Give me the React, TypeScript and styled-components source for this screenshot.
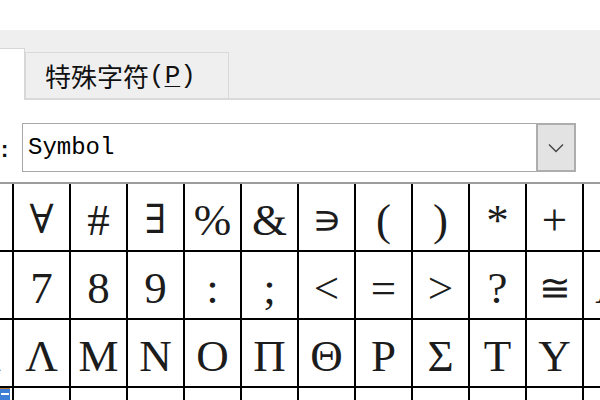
import React from "react";
import styled, { createGlobalStyle } from "styled-components";

const Global = createGlobalStyle`
  html, body { margin: 0; padding: 0; background: #ffffff; }
  body { width: 600px; height: 400px; overflow: hidden; font-family: "Liberation Sans", sans-serif; }
`;

const Page = styled.div`
  width: 600px;
  height: 400px;
  overflow: hidden;
  display: flex;
  flex-direction: column;
  background: #ffffff;
`;

const TopGap = styled.div`
  height: 30px;
  flex: none;
`;

const TabBand = styled.div`
  height: 70px;
  flex: none;
  background: #efefef;
  display: flex;
  align-items: flex-end;
`;

const ActiveTab = styled.div`
  width: 24px;
  height: 51px;
  flex: none;
  background: #ffffff;
  border-top: 1px solid #d6d6d6;
  border-right: 1px solid #d6d6d6;
`;

const Tab = styled.div`
  height: 48px;
  width: 204px;
  flex: none;
  box-sizing: border-box;
  background: #efefef;
  border: 1px solid #d9d9d9;
  border-bottom: 2px solid #d9d9d9;
  display: flex;
  align-items: center;
  padding-left: 19px;
  font-family: "Noto Sans CJK SC", sans-serif;
  font-size: 26px;
  color: #111111;
  line-height: 1;
`;

const Mnemonic = styled.span`
  font-family: "Liberation Mono", "Noto Sans CJK SC", monospace;
  font-size: 26px;
  & u { text-decoration-thickness: 1px; text-underline-offset: 3px; }
`;

const Filler = styled.div`
  flex: 1;
  border-bottom: 2px solid #d9d9d9;
`;

const Content = styled.div`
  flex: 1;
  display: flex;
  flex-direction: column;
  padding-top: 23px;
`;

const FontRow = styled.div`
  display: flex;
  align-items: center;
  height: 49px;
`;

const Label = styled.div`
  width: 22px;
  flex: none;
  font-family: "Liberation Mono", monospace;
  font-size: 22px;
  font-weight: bold;
  color: #111;
  padding-top: 8px;
  text-indent: -2px;
`;

const Combo = styled.div`
  width: 554px;
  height: 49px;
  box-sizing: border-box;
  border: 1px solid #a8a8a8;
  display: flex;
  align-items: stretch;
  background: #ffffff;
`;

const ComboText = styled.div`
  flex: 1;
  display: flex;
  align-items: center;
  padding-left: 5px;
  font-family: "Liberation Mono", monospace;
  font-size: 24px;
  color: #000;
`;

const DropButton = styled.div`
  width: 40px;
  flex: none;
  box-sizing: border-box;
  background: #e3e3e3;
  border: 2px solid #adadad;
  margin: -1px -1px -1px 0;
  display: flex;
  align-items: center;
  justify-content: center;
`;

const Grid = styled.div`
  margin-top: 10px;
  border-top: 2px solid #9c9c9c;
  display: grid;
  grid-template-columns: 12px repeat(10, 55px) 1fr;
  grid-auto-rows: 66px;
  gap: 2px;
  background: #000000;
`;

const Cell = styled.div<{ $edge?: "left" | "right" }>`
  background: #ffffff;
  overflow: hidden;
  display: flex;
  justify-content: ${(p) => (p.$edge === "left" ? "flex-end" : "flex-start")};
  position: relative;
`;

const Glyph = styled.div<{ $size?: number }>`
  width: 55px;
  flex: none;
  display: flex;
  align-items: center;
  justify-content: center;
  padding-top: 6px;
  box-sizing: border-box;
  font-family: "Liberation Serif", "DejaVu Serif", serif;
  font-size: ${(p) => p.$size ?? 45}px;
  line-height: 1;
  color: #1c1c1c;
`;

const Marker = styled.div`
  position: absolute;
  left: 0;
  top: 0;
  width: 10px;
  height: 12px;
  background: #3d7fd6;
  border-top: 1px solid #b77a3a;
  &::after {
    content: "";
    position: absolute;
    left: 1px;
    right: 1px;
    top: 4px;
    height: 2px;
    background: #ffffff;
  }
`;

const rows: string[][] = [
  ["!", "∀", "#", "∃", "%", "&", "∍", "(", ")", "*", "+", ","],
  ["6", "7", "8", "9", ":", ";", "<", "=", ">", "?", "≅", "Α"],
  ["Κ", "Λ", "Μ", "Ν", "Ο", "Π", "Θ", "Ρ", "Σ", "Τ", "Υ", "ς"],
  ["Ω", "Ξ", "Ψ", "Ζ", "[", "∴", "]", "⊥", "_", "", "α", "β"],
];

const sizes: Record<string, number> = { "∍": 42, "∀": 40, "∃": 40, "≅": 38 };

export default function App() {
  return (
    <Page>
      <Global />
      <TopGap />
      <TabBand>
        <ActiveTab />
        <Tab>
          特殊字符
          <Mnemonic>
            (<u>P</u>)
          </Mnemonic>
        </Tab>
        <Filler />
      </TabBand>
      <Content>
        <FontRow>
          <Label>:</Label>
          <Combo>
            <ComboText>Symbol</ComboText>
            <DropButton>
              <svg width="16" height="10" viewBox="0 0 16 10">
                <polyline points="1,1.5 8,8.5 15,1.5" fill="none" stroke="#444" strokeWidth="1.4" />
              </svg>
            </DropButton>
          </Combo>
        </FontRow>
        <Grid>
          {rows.map((r, ri) =>
            r.map((ch, ci) => {
              const edge = ci === 0 ? "left" : ci === r.length - 1 ? "right" : undefined;
              return (
                <Cell key={`${ri}-${ci}`} $edge={edge}>
                  {ri === 3 && ci === 0 ? <Marker /> : <Glyph $size={sizes[ch]}>{ch}</Glyph>}
                </Cell>
              );
            })
          )}
        </Grid>
      </Content>
    </Page>
  );
}
